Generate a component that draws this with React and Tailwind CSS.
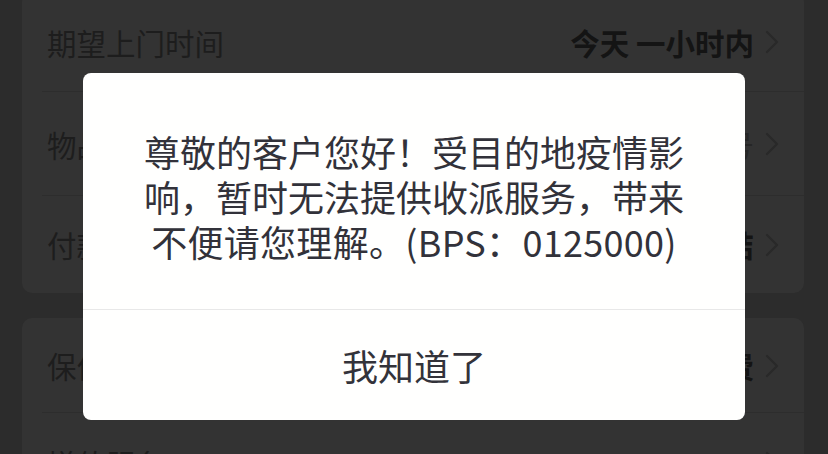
import React from "react";

const Chevron = () => (
  <svg width="16" height="26" viewBox="0 0 16 26" className="shrink-0">
    <polyline points="3,3 13,13 3,23" fill="none" stroke="#292929" strokeWidth="2.2" strokeLinecap="round" strokeLinejoin="round" />
  </svg>
);

const Row = ({ label, value, bold = true, divider = true, h = "h-[100px]" }) => (
  <div className={`relative flex items-center pl-[25px] pr-[24px] ${h}`}>
    <span className="text-[29.5px] text-[#1d1d1d] flex-1">{label}</span>
    <span className={`text-[29.5px] ${bold ? "font-bold text-[#141414]" : "text-[#262626]"} mr-[10px]`}>{value}</span>
    <Chevron />
    {divider && <div className="absolute left-[20px] right-0 bottom-0 h-[1px] bg-[#2d2d2d]" />}
  </div>
);

export default function App() {
  return (
    <div
      className="relative w-[828px] h-[454px] overflow-hidden bg-[#2c2c2c]"
      style={{ fontFamily: '"Noto Sans CJK SC", "Noto Sans", sans-serif' }}
    >
      <div className="flex flex-col gap-[25px] px-[22px] mt-[-8px] w-[804px]">
        <div className="bg-[#333333] rounded-[10px] w-[782px]">
          <Row label="期望上门时间" value="今天 一小时内" />
          <Row label="物品信息" value="请填写物品信息号" bold={false} h="h-[104px]" />
          <Row label="付款方式" value="寄付现结" divider={false} h="h-[97px]" />
        </div>
        <div className="bg-[#333333] rounded-[10px] w-[782px]">
          <Row label="保价服务" value="不保价免费" h="h-[95px]" />
          <Row label="增值服务" value="" divider={false} />
        </div>
      </div>

      <div className="absolute left-[83px] top-[73px] w-[662px] h-[347px] bg-[#fffffe] rounded-[8px] flex flex-col">
        <div className="h-[236px] pt-[56px] text-[36px] leading-[45px] text-[#32323a] text-center">
          <div>尊敬的客户您好！受目的地疫情影</div>
          <div>响，暂时无法提供收派服务，带来</div>
          <div className="tracking-[0.3px]">不便请您理解。(BPS：0125000)</div>
        </div>
        <div className="h-[1px] bg-[#e8e8e8]" />
        <div className="flex-1 flex items-center justify-center text-[36px] text-[#33333a]">
          我知道了
        </div>
      </div>
    </div>
  );
}
